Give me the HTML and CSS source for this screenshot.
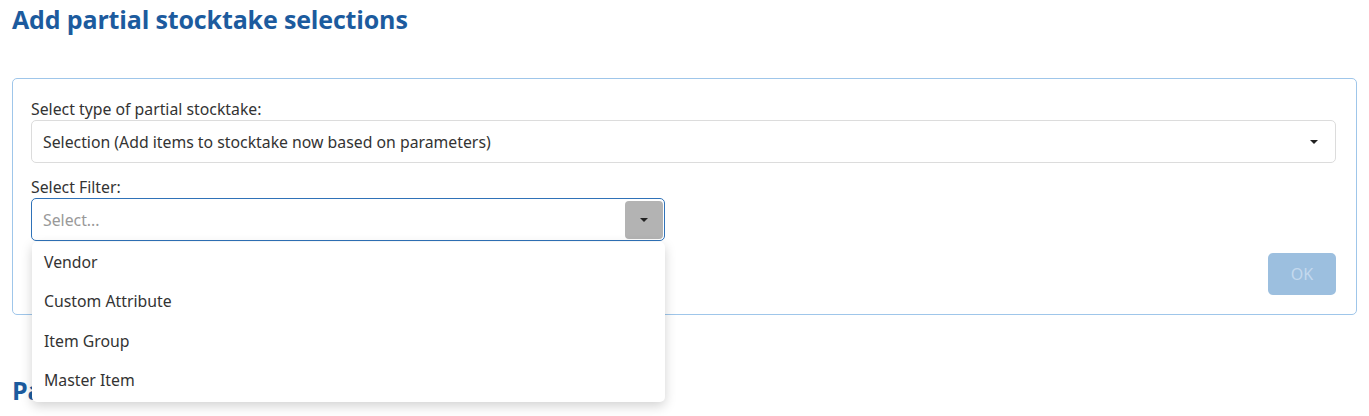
FILE: index.html
```html
<!DOCTYPE html>
<html>
<head>
<meta charset="utf-8">
<link rel="stylesheet" href="styles.css">
</head>
<body>
<div class="page">
  <h1 class="title">Add partial stocktake selections</h1>
  <div class="card">
    <label class="label">Select type of partial stocktake:</label>
    <div class="select">
      <span class="select-text">Selection (Add items to stocktake now based on parameters)</span>
      <span class="caret"></span>
    </div>
    <label class="label label-filter">Select Filter:</label>
    <div class="filter-wrap">
      <div class="select select-focus">
        <span class="placeholder">Select...</span>
        <span class="toggle"><span class="caret"></span></span>
      </div>
      <ul class="menu">
        <li>Vendor</li>
        <li>Custom Attribute</li>
        <li>Item Group</li>
        <li>Master Item</li>
      </ul>
    </div>
    <div class="actions">
      <button class="btn-ok" disabled>OK</button>
    </div>
  </div>
  <h2 class="title title-2">Partial stocktake selections</h2>
</div>
</body>
</html>
```

FILE: styles.css
```css
html, body {
  margin: 0;
  padding: 0;
  background: #fff;
}
body {
  font-family: "Noto Sans", "Open Sans", sans-serif;
  color: #333;
  overflow: hidden;
  height: 416px;
}
.page {
  padding: 0 12px;
}
.title {
  font-family: "Open Sans", sans-serif;
  font-weight: 700;
  font-size: 25px;
  color: #1c5b9e;
  margin: 0;
  padding-top: 3px;
  height: 75px;
  line-height: 32px;
  letter-spacing: -0.15px;
}
.title-2 {
  margin-top: 56px;
}
.card {
  border: 1px solid #9fc6ea;
  border-radius: 5px;
  padding: 19px 20px 20px 18px;
  height: 196px;
}
.label {
  display: block;
  font-size: 15.8px;
  line-height: 22px;
  margin-bottom: 0;
}
.label-filter {
  margin-top: 13px;
}
.select {
  box-sizing: border-box;
  height: 43px;
  border: 1px solid #dcdcdc;
  border-radius: 5px;
  display: flex;
  align-items: center;
  padding: 0 11px;
  font-size: 15.8px;
  position: relative;
}
.select-text {
  flex: 1;
}
.caret {
  width: 0;
  height: 0;
  border-left: 4px solid transparent;
  border-right: 4px solid transparent;
  border-top: 4px solid #222;
  margin-right: 6px;
}
.filter-wrap {
  width: 634px;
  position: relative;
}
.select-focus {
  border-color: #2f72b8;
  padding-right: 1px;
}
.placeholder {
  flex: 1;
  color: #999;
}
.toggle {
  width: 38px;
  height: 38px;
  background: #b3b3b3;
  border-radius: 4px;
  display: flex;
  align-items: center;
  justify-content: center;
}
.toggle .caret {
  margin: 0;
}
.menu {
  position: absolute;
  top: 44px;
  left: 1px;
  right: 0;
  margin: 0;
  padding: 1px 0 2px;
  list-style: none;
  background: #fff;
  border-radius: 5px;
  box-shadow: 0 4px 12px rgba(0,0,0,0.18);
  z-index: 5;
}
.menu li {
  height: 39.3px;
  line-height: 39.3px;
  padding-left: 12px;
  font-size: 15.8px;
}
.actions {
  display: flex;
  justify-content: flex-end;
  margin-top: 12px;
}
.btn-ok {
  width: 68px;
  height: 42px;
  border: none;
  border-radius: 5px;
  background: #9cbfdf;
  color: #c4d9ee;
  font-family: "Noto Sans", sans-serif;
  font-size: 16px;
  margin-right: 0;
}
```
